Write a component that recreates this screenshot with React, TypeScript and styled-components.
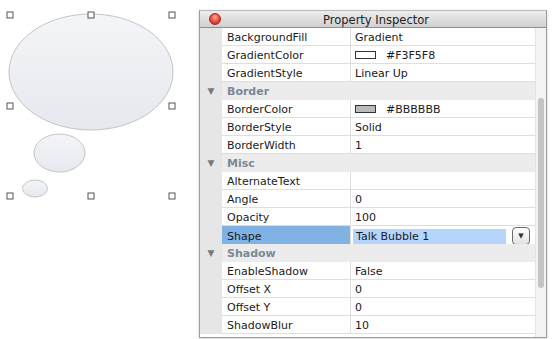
import styled, { createGlobalStyle } from "styled-components";

const GlobalStyle = createGlobalStyle`
  html, body {
    margin: 0;
    padding: 0;
    background: #ffffff;
  }
  body {
    font-family: "DejaVu Sans", "Liberation Sans", sans-serif;
    font-size: 11px;
    color: #1a1a1a;
  }
`;

const Page = styled.div`
  width: 553px;
  height: 339px;
  display: flex;
  align-items: flex-start;
  overflow: hidden;
  background: #ffffff;
`;

const Canvas = styled.svg`
  flex: 0 0 199px;
  height: 339px;
`;

const Window = styled.div`
  margin-top: 10px;
  width: 348px;
  height: 328px;
  box-sizing: border-box;
  border: 1px solid #9c9c9c;
  border-top-color: #b8b8b8;
  display: flex;
  flex-direction: column;
  background: #ffffff;
  box-shadow: 0 1px 3px rgba(0, 0, 0, 0.18);
`;

const TitleBar = styled.div`
  height: 16px;
  flex: 0 0 16px;
  display: flex;
  align-items: center;
  position: relative;
  background: linear-gradient(#ededed, #d0d0d0);
  border-bottom: 1px solid #8e8e8e;
`;

const CloseButton = styled.span`
  position: absolute;
  left: 9px;
  top: 2px;
  width: 12px;
  height: 12px;
  border-radius: 50%;
  box-sizing: border-box;
  border: 1px solid #a02a22;
  background: radial-gradient(circle at 50% 35%, #ffb3a8 0%, #f0543f 45%, #b81c10 100%);
`;

const Title = styled.div`
  flex: 1;
  text-align: center;
  font-size: 11.5px;
  color: #222;
  padding-left: 6px;
  padding-top: 1px;
`;

const Body = styled.div`
  flex: 1;
  display: flex;
  min-height: 0;
`;

const PropList = styled.div`
  flex: 1;
  display: flex;
  flex-direction: column;
`;

const Row = styled.div`
  display: grid;
  grid-template-columns: 22px 129px 1fr;
  height: 18px;
`;

const Gutter = styled.div`
  background: #e6e6e6;
  color: #7a7a7a;
  font-size: 9px;
  display: flex;
  align-items: center;
  justify-content: center;
`;

const NameCell = styled.div<{ $selected?: boolean }>`
  box-sizing: border-box;
  padding: 1px 0 0 5px;
  display: flex;
  align-items: center;
  border-bottom: 1px solid #dedede;
  border-right: 1px solid #dedede;
  background: ${(p) => (p.$selected ? "#80b2e4" : "#ffffff")};
  white-space: nowrap;
`;

const ValueCell = styled.div`
  box-sizing: border-box;
  padding: 1px 0 0 4px;
  display: flex;
  align-items: center;
  gap: 10px;
  border-bottom: 1px solid #dedede;
  white-space: nowrap;
`;

const CategoryLabel = styled.div`
  grid-column: 2 / 4;
  background: #ececec;
  padding: 1px 0 0 5px;
  display: flex;
  align-items: center;
  font-weight: bold;
  color: #7c8799;
`;

const Swatch = styled.span<{ $color: string }>`
  width: 19px;
  height: 6px;
  border: 1px solid #333;
  background: ${(p) => p.$color};
`;

const EditBox = styled.div`
  flex: 0 0 153px;
  height: 15px;
  margin-left: -2px;
  padding-left: 3px;
  box-sizing: border-box;
  display: flex;
  align-items: center;
  background: #b6d5fd;
`;

const DropButton = styled.div`
  width: 18px;
  height: 18px;
  margin-left: -4px;
  box-sizing: border-box;
  border: 1px solid #6c6c6c;
  border-radius: 4px;
  background: linear-gradient(#ffffff, #e2e2e2);
  display: flex;
  align-items: center;
  justify-content: center;
  font-size: 7px;
  color: #333;
`;

const ScrollTrack = styled.div`
  flex: 0 0 10px;
  background: #f3f3f3;
  border-left: 1px solid #e4e4e4;
  display: flex;
  justify-content: center;
`;

const Thumb = styled.div`
  width: 6px;
  margin-top: 70px;
  height: 190px;
  border-radius: 3px;
  background: #c4c4c4;
`;

type Prop =
  | { kind: "cat"; label: string }
  | { kind: "prop"; name: string; value?: string; color?: string; edit?: boolean };

const props: Prop[] = [
  { kind: "prop", name: "BackgroundFill", value: "Gradient" },
  { kind: "prop", name: "GradientColor", value: "#F3F5F8", color: "#ffffff" },
  { kind: "prop", name: "GradientStyle", value: "Linear Up" },
  { kind: "cat", label: "Border" },
  { kind: "prop", name: "BorderColor", value: "#BBBBBB", color: "#bbbbbb" },
  { kind: "prop", name: "BorderStyle", value: "Solid" },
  { kind: "prop", name: "BorderWidth", value: "1" },
  { kind: "cat", label: "Misc" },
  { kind: "prop", name: "AlternateText", value: "" },
  { kind: "prop", name: "Angle", value: "0" },
  { kind: "prop", name: "Opacity", value: "100" },
  { kind: "prop", name: "Shape", value: "Talk Bubble 1", edit: true },
  { kind: "cat", label: "Shadow" },
  { kind: "prop", name: "EnableShadow", value: "False" },
  { kind: "prop", name: "Offset X", value: "0" },
  { kind: "prop", name: "Offset Y", value: "0" },
  { kind: "prop", name: "ShadowBlur", value: "10" },
];

const handles: Array<[number, number]> = [
  [10, 15], [91, 15], [172, 15],
  [10, 106], [172, 106],
  [10, 196], [91, 196], [172, 196],
];

const Bubble = () => (
  <Canvas viewBox="0 0 199 339">
    <defs>
      <linearGradient id="fill" x1="0" y1="0" x2="0" y2="1">
        <stop offset="0" stopColor="#f4f5f8" />
        <stop offset="1" stopColor="#e5e8ed" />
      </linearGradient>
    </defs>
    <ellipse cx="91" cy="72" rx="82" ry="58" fill="url(#fill)" stroke="#c4c4c4" />
    <ellipse cx="59.5" cy="153" rx="25.5" ry="19" fill="url(#fill)" stroke="#c4c4c4" />
    <ellipse cx="35" cy="188.5" rx="12.5" ry="8.5" fill="url(#fill)" stroke="#c4c4c4" />
    {handles.map(([x, y]) => (
      <rect key={`${x}-${y}`} x={x - 3} y={y - 3} width="6" height="6" fill="#fff" stroke="#555" />
    ))}
  </Canvas>
);

const App = () => {
  return (
    <>
      <GlobalStyle />
      <Page>
        <Bubble />
        <Window>
          <TitleBar>
            <CloseButton />
            <Title>Property Inspector</Title>
          </TitleBar>
          <Body>
            <PropList>
              {props.map((p, i) =>
                p.kind === "cat" ? (
                  <Row key={i}>
                    <Gutter>▼</Gutter>
                    <CategoryLabel>{p.label}</CategoryLabel>
                  </Row>
                ) : (
                  <Row key={i}>
                    <Gutter />
                    <NameCell $selected={p.edit}>{p.name}</NameCell>
                    <ValueCell>
                      {p.color && <Swatch $color={p.color} />}
                      {p.edit ? (
                        <>
                          <EditBox>{p.value}</EditBox>
                          <DropButton>▼</DropButton>
                        </>
                      ) : (
                        p.value
                      )}
                    </ValueCell>
                  </Row>
                )
              )}
            </PropList>
            <ScrollTrack>
              <Thumb />
            </ScrollTrack>
          </Body>
        </Window>
      </Page>
    </>
  );
};

export default App;
